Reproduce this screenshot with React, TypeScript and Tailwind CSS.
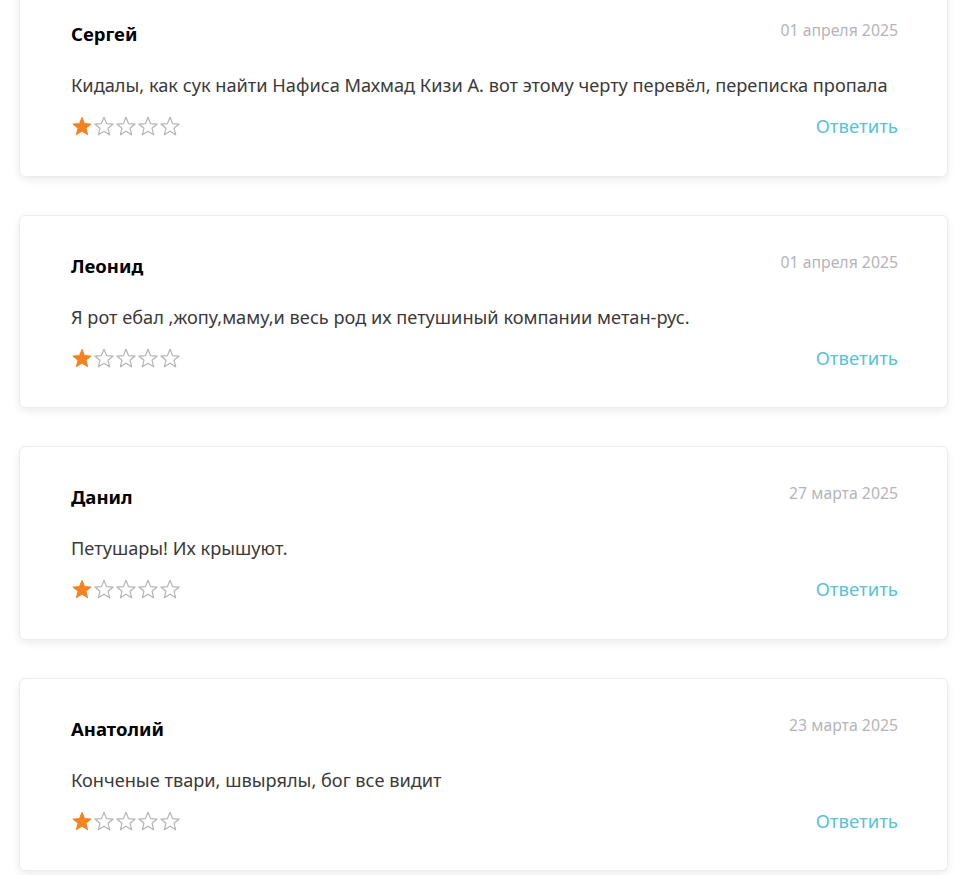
import React from "react";

type Review = {
  name: string;
  date: string;
  text: string;
  rating: number;
};

const reviews: Review[] = [
  {
    name: "Сергей",
    date: "01 апреля 2025",
    text: "Кидалы, как сук найти Нафиса Махмад Кизи А. вот этому черту перевёл, переписка пропала",
    rating: 1,
  },
  {
    name: "Леонид",
    date: "01 апреля 2025",
    text: "Я рот ебал ,жопу,маму,и весь род их петушиный компании метан-рус.",
    rating: 1,
  },
  {
    name: "Данил",
    date: "27 марта 2025",
    text: "Петушары! Их крышуют.",
    rating: 1,
  },
  {
    name: "Анатолий",
    date: "23 марта 2025",
    text: "Конченые твари, швырялы, бог все видит",
    rating: 1,
  },
];

const Star = ({ filled }: { filled: boolean }) => (
  <svg width="22" height="22" viewBox="0 0 24 24">
    <path
      d="M12 2.5l2.8 6.9 7.2.5-5.6 4.6 1.8 7.1L12 17.6l-6.2 4 1.8-7.1L2 9.9l7.2-.5z"
      fill={filled ? "#f5821f" : "none"}
      stroke={filled ? "#f5821f" : "#b4b4b4"}
      strokeWidth={filled ? 1 : 1.3}
      strokeLinejoin="round"
    />
  </svg>
);

const ReviewCard = ({ review }: { review: Review }) => (
  <div className="bg-white border border-[#ececec] rounded-md shadow-[0_3px_8px_rgba(0,0,0,0.08)] pl-[51px] pr-[49px] pt-[38px] pb-[37.5px]">
    <div className="flex justify-between items-center h-6">
      <span className="text-[18.5px] font-bold text-black">{review.name}</span>
      <span className="text-[15.8px] text-[#b3b5b8] -mt-[6px]">{review.date}</span>
    </div>
    <p className="mt-[26px] text-[18.2px] leading-[26px] text-[#3a3a3a] whitespace-nowrap">{review.text}</p>
    <div className="mt-[16px] flex justify-between items-center h-6">
      <div className="flex">
        {[1, 2, 3, 4, 5].map((i) => (
          <Star key={i} filled={i <= review.rating} />
        ))}
      </div>
      <button className="text-[18.6px] text-[#55c3da]">Ответить</button>
    </div>
  </div>
);

export default function App() {
  return (
    <div
      className="bg-white min-h-screen overflow-hidden"
      style={{ fontFamily: '"Noto Sans", "Open Sans", sans-serif' }}
    >
      <div className="-mt-[17px] ml-[19px] mr-[17px] flex flex-col gap-[38px]">
        {reviews.map((r) => (
          <ReviewCard key={r.name} review={r} />
        ))}
      </div>
    </div>
  );
}
